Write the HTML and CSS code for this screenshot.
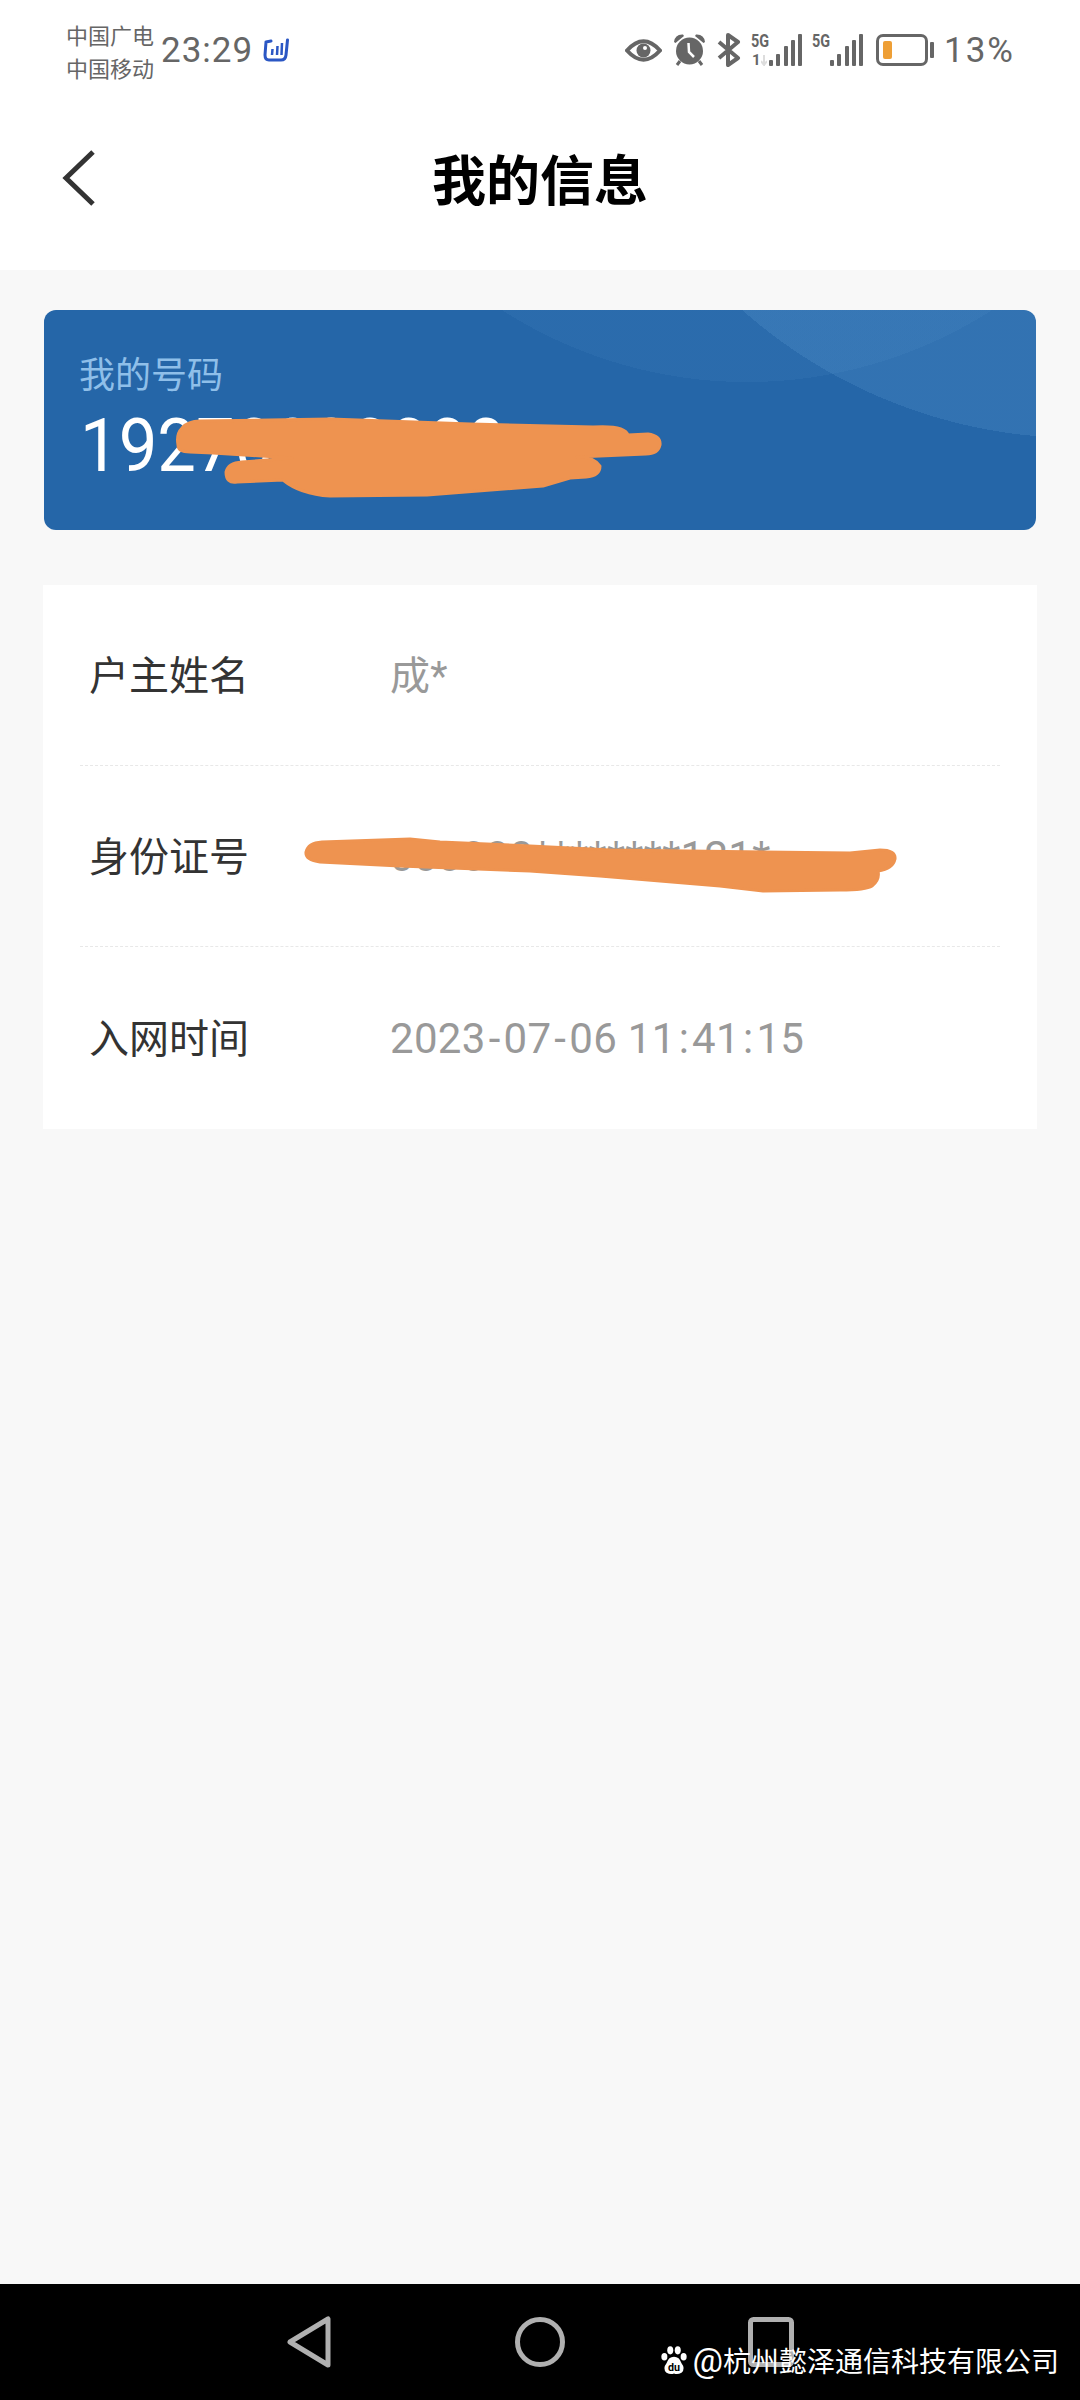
FILE: index.html
```html
<!DOCTYPE html>
<html lang="zh-CN">
<head>
    <meta charset="UTF-8">
    <meta name="viewport" content="width=device-width, initial-scale=1.0">
    <title>我的信息</title>
    <link rel="stylesheet" href="styles.css">
</head>
<body>
    <div class="screen">
        <div class="status-bar">
            <div class="carriers">
                <span>中国广电</span>
                <span>中国移动</span>
            </div>
            <span class="clock">23:29</span>
            <svg class="app-icon" viewBox="0 0 26 24" width="26" height="24">
                <path d="M3 4 L8 3 M3 4 L2 17 Q2 22 6 22 L18 22 Q22.500 22 23 17 L24.500 2" fill="none" stroke="#2b57c4" stroke-width="3" stroke-linecap="round"/>
                <path d="M9.500 11 L9 17 M14.500 8 L14 17 M19 5 L18.500 17" stroke="#2b57c4" stroke-width="2.500"/>
            </svg>
            <div class="status-icons">
                <svg class="icon-eye" viewBox="0 0 37 25" width="37" height="25">
                    <path d="M2 12.500 Q18.500 -6 35 12.500 Q18.500 31 2 12.500 Z" fill="none" stroke="#666" stroke-width="4"/>
                    <circle cx="18.500" cy="12.500" r="7" fill="#666"/>
                    <circle cx="20" cy="10" r="2" fill="#fff"/>
                </svg>
                <svg class="icon-alarm" viewBox="0 0 31 32" width="31" height="32">
                    <circle cx="15.500" cy="17" r="13.500" fill="#666"/>
                    <path d="M0 8 Q1 0 9 0.500 L10 2 L1.500 9 Z M31 8 Q30 0 22 0.500 L21 2 L29.500 9 Z" fill="#666"/>
                    <path d="M6 27 L3 31 M25 27 L28 31" stroke="#666" stroke-width="3"/>
                    <path d="M14.500 9 L15 18 L20 23" fill="none" stroke="#fff" stroke-width="2.500"/>
                </svg>
                <svg class="icon-bt" viewBox="0 0 24 34" width="24" height="34">
                    <path d="M2 9 L21 25 L11 32 L11 2 L21 9 L2 25" fill="none" stroke="#666" stroke-width="4" stroke-linejoin="round"/>
                </svg>
                <div class="signal">
                    <span class="net-label">5G</span>
                    <span class="net-sub">1</span>
                    <svg class="net-arrow" viewBox="0 0 6 11" width="6" height="11">
                        <path d="M3 0 V10 L0 6 M3 10 L6 6" fill="none" stroke="#ddd" stroke-width="2"/>
                    </svg>
                    <div class="bars">
                        <div class="bar bar-1"></div>
                        <div class="bar bar-2"></div>
                        <div class="bar bar-3"></div>
                        <div class="bar bar-4"></div>
                        <div class="bar bar-5"></div>
                    </div>
                </div>
                <div class="signal">
                    <span class="net-label">5G</span>
                    <div class="bars">
                        <div class="bar bar-1"></div>
                        <div class="bar bar-2"></div>
                        <div class="bar bar-3"></div>
                        <div class="bar bar-4"></div>
                        <div class="bar bar-5"></div>
                    </div>
                </div>
                <div class="battery">
                    <div class="battery-body"><div class="battery-level"></div></div>
                    <div class="battery-nub"></div>
                </div>
                <span class="battery-text">13%</span>
            </div>
        </div>

        <div class="title-bar">
            <svg class="back" viewBox="0 0 34 56" width="34" height="56">
                <path d="M31 2 L4 28 L31 54" fill="none" stroke="#333" stroke-width="5"/>
            </svg>
            <h1>我的信息</h1>
        </div>

        <div class="content">
            <div class="number-card">
                <div class="label">我的号码</div>
                <div class="number">19270000000</div>
                <!-- hand-drawn cover over the phone number -->
                <svg class="scribble scribble-number" viewBox="0 0 500 90" width="500" height="90">
                    <path d="M8 35 Q6 24 12 18 Q18 11 30 11 L160 9 L300 14 L423 17 Q455 15 458 25 L478 24 Q491 26 490 35 Q488 44 476 44 L430 46 L407 47 Q423 46 430 56 Q430 66 416 67 L400 68 L373 76 L257 85 L160 86 Q130 84 113 70 L67 72 Q56 74 56 62 Q58 53 72 52 L122 48 L43 43 L20 42 Q8 42 8 35 Z" fill="#ee9350" stroke="#ee9350" stroke-width="3" stroke-linejoin="round"/>
                </svg>
            </div>

            <div class="info-card">
                <div class="info-row">
                    <span class="info-name">户主姓名</span>
                    <span class="info-value info-value-cjk">成*</span>
                </div>
                <div class="info-row">
                    <span class="info-name">身份证号</span>
                    <span class="info-value">000000********121*</span>
                    <!-- same cover over the id number -->
                    <svg class="scribble scribble-id" viewBox="0 0 600 70" width="600" height="70">
                        <path d="M6 22 Q8 13 22 12 L110 9 L140 12 L230 16 L310 20 L550 23 L580 20 Q596 20 595 29 Q593 39 578 41 Q580 50 572 56 Q566 60 540 60 L463 61 L420 56 L300 46 L230 41 L100 36 L20 32 Q5 30 6 22 Z" fill="#ee9350" stroke="#ee9350" stroke-width="3" stroke-linejoin="round"/>
                    </svg>
                </div>
                <div class="info-row">
                    <span class="info-name">入网时间</span>
                    <span class="info-value">2023<span class="sep">-</span>07<span class="sep">-</span>06 11<span class="sep">:</span>41<span class="sep">:</span>15</span>
                </div>
            </div>
        </div>

        <div class="nav-bar">
            <svg class="nav-back" viewBox="0 0 46 52" width="46" height="52">
                <path d="M42 3 L42 49 L4 26 Z" fill="none" stroke="#b0b0b0" stroke-width="5" stroke-linejoin="round"/>
            </svg>
            <svg class="nav-home" viewBox="0 0 50 50" width="50" height="50">
                <circle cx="25" cy="25" r="22.500" fill="none" stroke="#b0b0b0" stroke-width="5"/>
            </svg>
            <svg class="nav-recent" viewBox="0 0 46 50" width="46" height="50">
                <rect x="2.500" y="2.500" width="41" height="45" rx="3" fill="none" stroke="#b0b0b0" stroke-width="5"/>
            </svg>
            <div class="watermark">
                <svg viewBox="0 0 24 28" width="26" height="30">
                    <path d="M12 11 Q17 11 19 17 Q23 22 19 26 Q15 28 12 26.500 Q9 28 5 26 Q1 22 5 17 Q7 11 12 11 Z" fill="#fff"/>
                    <ellipse cx="3" cy="11" rx="2.800" ry="3.500" fill="#fff"/>
                    <ellipse cx="21" cy="11" rx="2.800" ry="3.500" fill="#fff"/>
                    <ellipse cx="8.500" cy="5" rx="2.800" ry="3.800" fill="#fff"/>
                    <ellipse cx="15.500" cy="5" rx="2.800" ry="3.800" fill="#fff"/>
                    <text x="12" y="24" text-anchor="middle" font-size="10" font-weight="700" fill="#000">du</text>
                </svg>
                <span><span class="at">@</span>杭州懿泽通信科技有限公司</span>
            </div>
        </div>
    </div>
</body>
</html>
```

FILE: styles.css
```css
* {
    box-sizing: border-box;
}

body {
    margin: 0;
    font-family: Roboto, "Noto Sans CJK SC", sans-serif;
    background-color: #f8f8f8;
}

.screen {
    width: 1080px;
    height: 2400px;
    display: flex;
    flex-direction: column;
}

/* Status bar */
.status-bar {
    height: 100px;
    background-color: #fff;
    display: flex;
    align-items: center;
    padding: 0 66px;
    color: #666;
}

.carriers {
    display: flex;
    flex-direction: column;
    margin-top: 6px;
    font-size: 22px;
    line-height: 33px;
    width: 95px;
}

.clock {
    font-size: 35px;
    letter-spacing: 1px;
    width: 102px;
}

.status-icons {
    margin-left: auto;
    margin-right: -1px;
    display: flex;
    align-items: center;
}

.icon-eye {
    margin-right: 12px;
}

.icon-alarm {
    margin-right: 12px;
}

.icon-bt {
    margin-right: 10px;
}

.signal {
    position: relative;
    width: 51px;
    height: 32px;
    margin-right: 10px;
}

.net-label {
    position: absolute;
    left: 0;
    top: -2px;
    font-size: 18px;
    font-weight: 700;
    line-height: 18px;
    transform: scaleX(0.8);
    transform-origin: left;
}

.net-sub {
    position: absolute;
    left: 1px;
    top: 20px;
    font-size: 15px;
    font-weight: 700;
    line-height: 13px;
}

.net-arrow {
    position: absolute;
    left: 10px;
    top: 21px;
}

.bars {
    position: absolute;
    right: 0;
    bottom: 0;
    display: flex;
    align-items: flex-end;
    gap: 3.250px;
}

.bar {
    width: 4px;
    background-color: #666;
    border-radius: 1px;
}

.bar-1 {
    height: 6px;
}

.bar-2 {
    height: 12px;
}

.bar-3 {
    height: 20px;
}

.bar-4 {
    height: 26px;
}

.bar-5 {
    height: 32px;
}

.battery {
    display: flex;
    align-items: center;
    margin-right: 10px;
    margin-left: 3px;
}

.battery-body {
    width: 52px;
    height: 32px;
    border: 3px solid #666;
    border-radius: 7px;
    padding: 4px;
}

.battery-level {
    width: 9px;
    height: 100%;
    background-color: #ee9f36;
    border-radius: 2px;
}

.battery-nub {
    width: 4px;
    height: 16px;
    margin-left: 2px;
    background-color: #666;
    border-radius: 1px;
}

.battery-text {
    font-size: 35px;
    letter-spacing: 2px;
}

/* Title bar */
.title-bar {
    height: 170px;
    background-color: #fff;
    position: relative;
    display: flex;
    align-items: center;
    justify-content: center;
}

.back {
    position: absolute;
    left: 62px;
    top: 50px;
}

h1 {
    margin: 0 0 16px;
    font-size: 54px;
    font-weight: 700;
    color: #000;
}

/* Content */
.content {
    flex: 1;
    padding: 40px 44px 0;
}

.number-card {
    position: relative;
    height: 220px;
    padding: 43px 35px 0;
    border-radius: 12px;
    overflow: hidden;
    background-color: #2566a8;
    background-image:
        radial-gradient(circle 510px at 1036px -382px, rgba(120, 180, 230, 0.16) 100%, transparent 100%),
        radial-gradient(circle 453px at 703px -381px, rgba(120, 180, 230, 0.07) 100%, transparent 100%);
}

.label {
    font-size: 36px;
    line-height: 46px;
    color: #8fbfe9;
}

.number {
    margin-top: 7px;
    margin-left: 1px;
    font-size: 74px;
    line-height: 80px;
    color: #fff;
    transform: scaleX(0.93);
    transform-origin: left;
}

.scribble {
    position: absolute;
}

.scribble-number {
    left: 126px;
    top: 100px;
}

.info-card {
    margin: 55px -1px 0;
    background-color: #fff;
}

.info-row {
    position: relative;
    height: 181px;
    margin: 0 37px;
    padding-left: 9px;
    display: flex;
    align-items: center;
    border-bottom: 1px dashed #e8e8e8;
}

.info-row:last-child {
    border-bottom: none;
    height: 182px;
}

.info-name {
    width: 301px;
    margin-bottom: 5px;
    font-size: 40px;
    color: #333;
}

.info-value {
    font-size: 42px;
    letter-spacing: 0.300px;
    color: #999;
}

.info-value-cjk {
    margin-bottom: 5px;
    font-size: 40px;
}

.sep {
    margin: 0 3px;
}

.scribble-id {
    left: 220px;
    top: 64px;
}

/* Navigation bar */
.nav-bar {
    position: relative;
    height: 116px;
    background-color: #000;
    display: flex;
    align-items: center;
    justify-content: space-between;
    padding: 0 286px;
}

.watermark {
    position: absolute;
    right: 21px;
    bottom: 20px;
    display: flex;
    align-items: center;
    gap: 5px;
    font-size: 28px;
    color: #fff;
}

.at {
    font-size: 34px;
}
```
